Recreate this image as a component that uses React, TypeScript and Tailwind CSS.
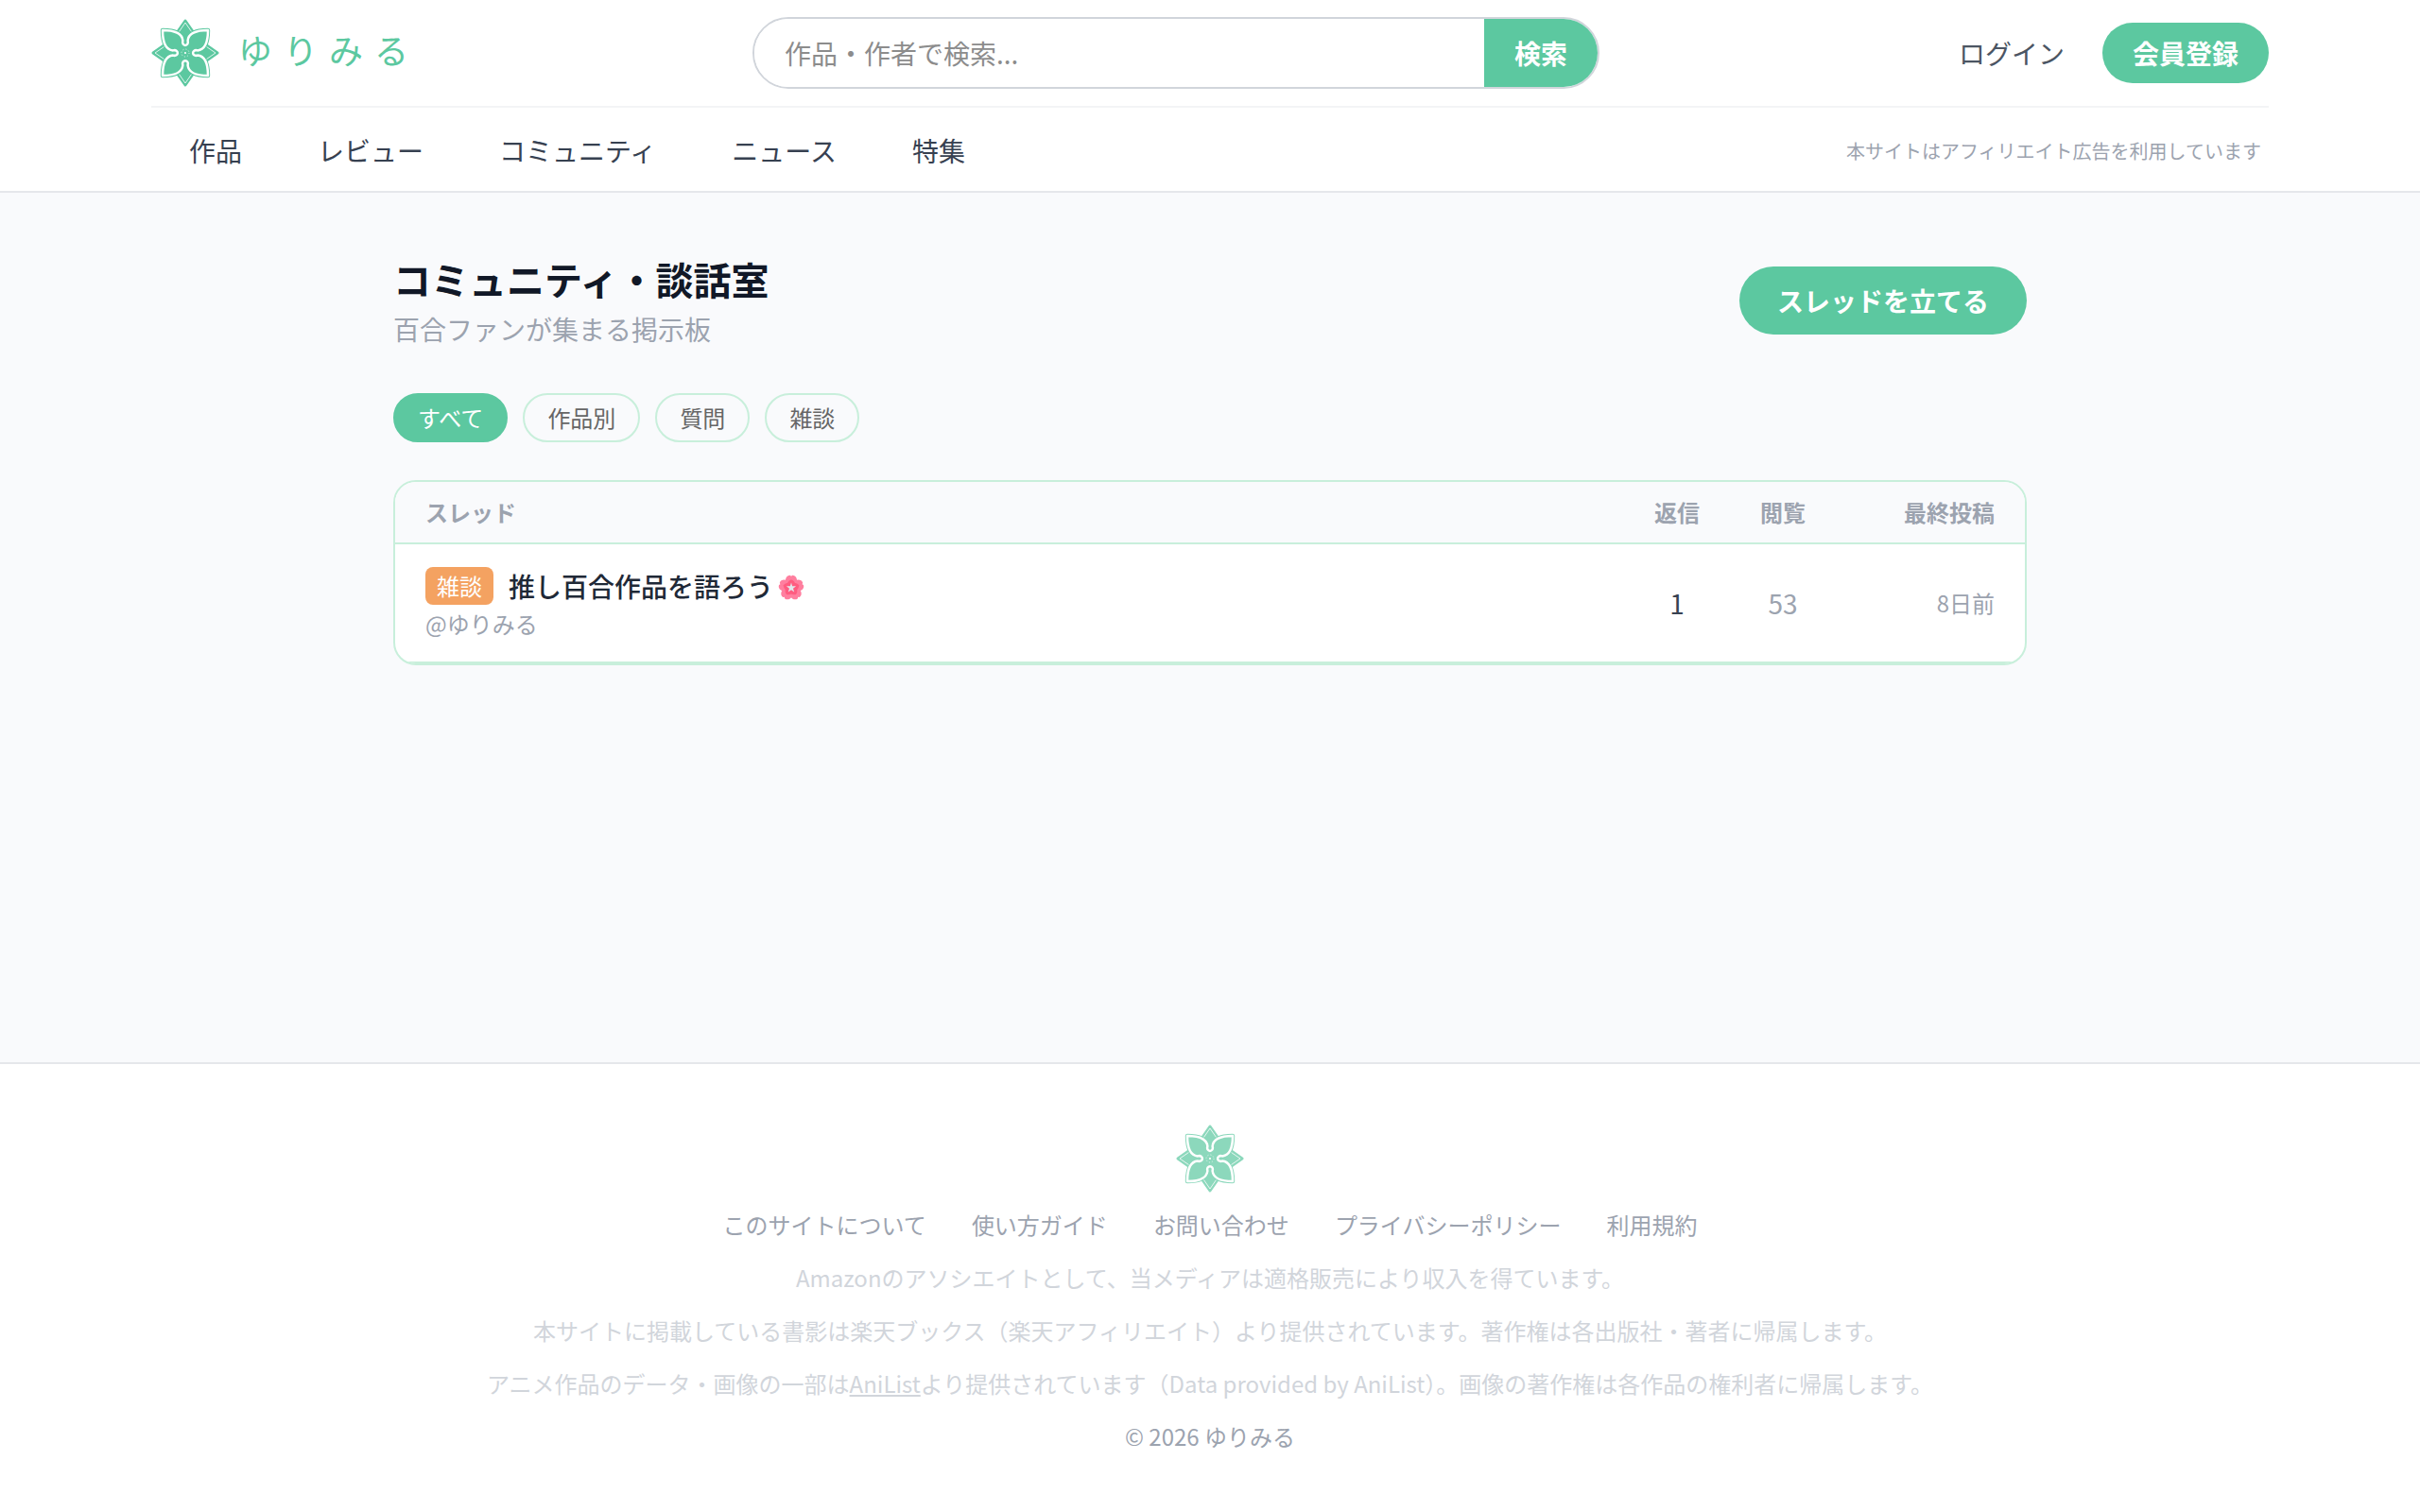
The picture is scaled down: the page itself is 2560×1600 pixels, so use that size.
import React from "react";

const PETALS =
  "M-24-24C-14-24-3.5-22-2.6-13C-4.5-6.5 4.5-6.5 2.6-13C3.5-22 14-24 24-24C24-14 22-3.5 13-2.6C6.5-4.5 6.5 4.5 13 2.6C22 3.5 24 14 24 24C14 24 3.5 22 2.6 13C4.5 6.5-4.5 6.5-2.6 13C-3.5 22-14 24-24 24C-24 14-22 3.5-13 2.6C-6.5 4.5-6.5-4.5-13-2.6C-22-3.5-24-14-24-24Z";

function Emblem({ className = "" }: { className?: string }) {
  return (
    <svg viewBox="-36 -36 72 72" className={`size-[72px] shrink-0 ${className}`} aria-hidden="true">
      {[0, 90, 180, 270].map((angle) => (
        <g key={angle} transform={`rotate(${angle})`}>
          <path
            d="M0-34L14-14L0 0L-14-14Z"
            fill="#5cc8a0"
            stroke="#5cc8a0"
            strokeWidth="3"
            strokeLinejoin="round"
          />
          <path d="M0-32L12-14.5M0-32L-12-14.5" fill="none" stroke="#fff" strokeWidth="0.8" />
        </g>
      ))}
      <path d={PETALS} fill="#5cc8a0" stroke="#5cc8a0" strokeWidth="4.4" strokeLinejoin="round" />
      <path d={PETALS} fill="#5cc8a0" stroke="#fff" strokeWidth="2.5" strokeLinejoin="round" />
      <circle r="1.1" fill="#fff" />
      <circle r="4" fill="none" stroke="#fff" strokeWidth="0.8" strokeDasharray="1 2.14" />
    </svg>
  );
}

function Blossom() {
  return (
    <svg
      viewBox="-14 -14 28 28"
      className="mt-1 ml-[5px] size-[28px] shrink-0"
      role="img"
      aria-label="桜の花"
    >
      {[0, 72, 144, 216, 288].map((angle) => (
        <path
          key={angle}
          transform={`rotate(${angle})`}
          d="M0 0C-4-2-6.2-5-6-8.5C-5.8-11-4-13.4-1.2-13.2L0-12.2L1.2-13.2C4-13.4 5.8-11 6-8.5C6.2-5 4-2 0 0Z"
          fill="#ff7f9f"
        />
      ))}
      {[0, 72, 144, 216, 288].map((angle) => (
        <path
          key={angle}
          transform={`rotate(${angle})`}
          d="M-4.2 0C-5.5-4-3-8 0-8.5C3-8 5.5-4 4.2 0Z"
          fill="#ff5c80"
        />
      ))}
      <path
        d="M0-5.4L1.1-1.7L5.1-1.7L2 .7L3.2 4.4L0 2.2L-3.2 4.4L-2 .7L-5.1-1.7L-1.1-1.7Z"
        fill="#e1e8ed"
      />
    </svg>
  );
}

const navItems = ["作品", "レビュー", "コミュニティ", "ニュース", "特集"];
const filters = ["すべて", "作品別", "質問", "雑談"];
const footerLinks = [
  "このサイトについて",
  "使い方ガイド",
  "お問い合わせ",
  "プライバシーポリシー",
  "利用規約",
];

function Header() {
  return (
    <header className="border-b-2 border-[#e5e7eb] bg-white">
      <div className="mx-auto max-w-[2304px] px-8">
        <div className="mx-auto flex h-[114px] max-w-[2240px] items-center border-b-2 border-[#f3f4f6]">
          <a href="#" className="flex w-[276px] items-center gap-5">
            <Emblem />
            <span className="pb-2 text-[36px] leading-[40px] whitespace-nowrap text-[#5cc8a0]">
              ゆ&#8196;り&#8196;み&#8196;る
            </span>
          </a>
          <form className="flex flex-1 justify-center" onSubmit={(e) => e.preventDefault()}>
            <div className="flex h-[76px] w-full max-w-[896px] overflow-hidden rounded-full border-2 border-[#d1d5db]">
              <input
                type="search"
                aria-label="作品・作者で検索"
                placeholder="作品・作者で検索..."
                className="min-w-0 flex-1 bg-white px-8 text-[28px] outline-none placeholder:text-[#8c8c8c]"
              />
              <button type="submit" className="bg-[#5cc8a0] px-8 text-[28px] font-bold text-white">
                検索
              </button>
            </div>
          </form>
          <div className="flex items-center gap-5 text-[28px] leading-[40px]">
            <a href="#" className="px-5 text-[#4b5563]">
              ログイン
            </a>
            <a href="#" className="rounded-full bg-[#5cc8a0] px-8 py-3 font-bold text-white">
              会員登録
            </a>
          </div>
        </div>
        <div className="mx-auto flex h-[88px] max-w-[2240px] items-center justify-between pt-[2px] pr-2 pl-10">
          <nav className="flex gap-20 text-[28px] leading-[40px] text-[#374151]">
            {navItems.map((item) => (
              <a key={item} href="#">
                {item}
              </a>
            ))}
          </nav>
          <p className="pt-[2px] text-[20px] leading-[28px] text-[#9ca3af]">
            本サイトはアフィリエイト広告を利用しています
          </p>
        </div>
      </div>
    </header>
  );
}

function ThreadTable() {
  return (
    <div className="mt-10 overflow-hidden rounded-3xl border-2 border-[#c8efdb] bg-white">
      <table className="w-full table-fixed border-separate border-spacing-0">
        <thead>
          <tr className="bg-[#f9fafc] text-[24px] leading-[32px] text-[#9ca3af] [&>th]:border-b-2 [&>th]:border-[#c8efdb] [&>th]:py-4 [&>th]:font-bold">
            <th scope="col" className="pl-8 text-left">
              スレッド
            </th>
            <th scope="col" className="w-28 text-center">
              返信
            </th>
            <th scope="col" className="w-28 text-center">
              閲覧
            </th>
            <th scope="col" className="w-[200px] pr-8 text-right">
              最終投稿
            </th>
          </tr>
        </thead>
        <tbody>
          <tr className="[&>td]:border-b-2 [&>td]:border-[#c8efdb] [&>td]:py-6">
            <td className="pl-8">
              <a href="#" className="flex items-center gap-4">
                <span className="rounded-lg bg-[#f4a261] px-3 py-1 text-[24px] leading-[32px] text-white">
                  雑談
                </span>
                <span className="flex items-center text-[28px] leading-[40px] font-medium text-[#1f2937]">
                  推し百合作品を語ろう
                  <Blossom />
                </span>
              </a>
              <p className="mt-1 text-[24px] leading-[32px] text-[#9ca3af]">@ゆりみる</p>
            </td>
            <td className="text-center text-[28px] leading-[40px] text-[#374151]">1</td>
            <td className="text-center text-[28px] leading-[40px] text-[#9ca3af]">53</td>
            <td className="pr-8 text-right text-[24px] leading-[32px] text-[#9ca3af]">8日前</td>
          </tr>
        </tbody>
      </table>
    </div>
  );
}

function Footer() {
  return (
    <footer className="border-t-2 border-[#e5e7eb] bg-white px-8 py-16 text-center text-[24px] leading-[32px]">
      <Emblem className="mx-auto mb-[18px] opacity-70" />
      <div className="flex flex-col gap-6 text-[#d1d5db]">
        <nav className="flex flex-wrap justify-center gap-x-12 text-[#9ca3af]">
          {footerLinks.map((link) => (
            <a key={link} href="#">
              {link}
            </a>
          ))}
        </nav>
        <p>Amazonのアソシエイトとして、当メディアは適格販売により収入を得ています。</p>
        <p>
          本サイトに掲載している書影は楽天ブックス（楽天アフィリエイト）より提供されています。著作権は各出版社・著者に帰属します。
        </p>
        <p>
          アニメ作品のデータ・画像の一部は
          <a href="#" className="underline">
            AniList
          </a>
          より提供されています（Data provided by AniList）。画像の著作権は各作品の権利者に帰属します。
        </p>
        <p className="text-[#9ca3af]">© 2026 ゆりみる</p>
      </div>
    </footer>
  );
}

export default function App() {
  return (
    <div
      lang="ja"
      className="flex min-h-screen flex-col bg-[#f9fafc] font-['Noto_Sans_CJK_JP',sans-serif] text-[#111827]"
    >
      <Header />
      <main className="mx-auto w-full max-w-[1792px] flex-1 px-8 py-16">
        <div className="flex items-center justify-between">
          <div>
            <h1 className="text-[40px] leading-[54px] font-bold">コミュニティ・談話室</h1>
            <p className="mt-[6px] text-[28px] leading-[40px] text-[#9ca3af]">
              百合ファンが集まる掲示板
            </p>
          </div>
          <button
            type="button"
            className="rounded-full bg-[#5cc8a0] px-10 py-4 text-[28px] leading-[40px] font-bold text-white"
          >
            スレッドを立てる
          </button>
        </div>
        <div className="mt-12 flex gap-4 text-[24px] leading-[32px]">
          {filters.map((label, i) => (
            <button
              key={label}
              type="button"
              aria-pressed={i === 0}
              className={
                i === 0
                  ? "rounded-full border-2 border-[#5cc8a0] bg-[#5cc8a0] px-6 py-2 text-white"
                  : "rounded-full border-2 border-[#c8efdb] px-6 py-2 text-[#666666]"
              }
            >
              {label}
            </button>
          ))}
        </div>
        <ThreadTable />
      </main>
      <Footer />
    </div>
  );
}
